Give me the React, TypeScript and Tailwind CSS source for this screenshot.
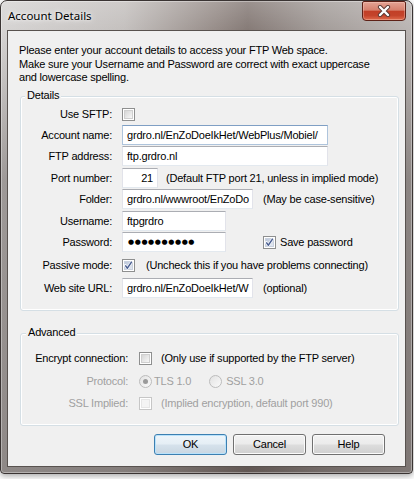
import React from "react";

function Check({ checked = false, disabled = false }: { checked?: boolean; disabled?: boolean }) {
  return (
    <div
      className={`relative w-[13px] h-[13px] shrink-0 border ${
        disabled ? "border-[#c6c6c6]" : "border-[#8e8f8f]"
      } bg-white p-[1px]`}
    >
      <div
        className={`w-full h-full border ${
          disabled
            ? "border-[#e6e6e6] bg-[#f4f4f4]"
            : checked
            ? "border-[#c9d1de] bg-[linear-gradient(135deg,#bcc7da_0%,#e4e9f2_100%)]"
            : "border-[#cfcfcf] bg-[linear-gradient(135deg,#d6d6d6_0%,#f7f7f7_100%)]"
        }`}
      />
      {checked && (
        <svg className="absolute left-[-1px] top-[-1px]" width="13" height="13" viewBox="0 0 13 13">
          <path d="M3.3 6.4 L5.4 9.2 L9.8 2.6" stroke="#ffffff" strokeWidth="2.6" fill="none" strokeLinecap="round" strokeLinejoin="round" />
          <path d="M3.3 6.4 L5.4 9.2 L9.8 2.6" stroke="#4a5f92" strokeWidth="1.5" fill="none" strokeLinejoin="round" />
        </svg>
      )}
    </div>
  );
}

function Radio({ selected = false }: { selected?: boolean }) {
  return (
    <div className="relative w-[13px] h-[13px] shrink-0 rounded-full border border-[#bcbcbc] bg-[linear-gradient(135deg,#e2e2e2_0%,#fafafa_100%)] flex items-center justify-center">
      {selected && <div className="w-[5px] h-[5px] rounded-full bg-[#9a9a9a]" />}
    </div>
  );
}

function Label({ children, w, disabled = false }: { children: React.ReactNode; w: string; disabled?: boolean }) {
  return (
    <div className={`${w} shrink-0 text-right whitespace-nowrap ${disabled ? "text-[#a0a0a0]" : "text-black"}`}>
      {children}
    </div>
  );
}

function Field({
  children,
  cls,
  right = false,
  hot = false,
}: {
  children: React.ReactNode;
  cls: string;
  right?: boolean;
  hot?: boolean;
}) {
  return (
    <div
      className={`${cls} h-[20px] shrink-0 bg-white border overflow-hidden whitespace-nowrap flex items-center ${
        right ? "justify-end pr-[4px]" : "pl-[4px]"
      } ${
        hot
          ? "border-[#aec4dc] border-t-[#7f9fc4]"
          : "border-[#e2e3ea] border-t-[#abadb3] border-b-[#e3e9ef]"
      }`}
    >
      {children}
    </div>
  );
}

function Button({ children, def = false }: { children: React.ReactNode; def?: boolean }) {
  return (
    <div
      className={`w-[73px] h-[21px] rounded-[3px] border flex items-center justify-center text-black ${
        def
          ? "border-[#3c7fb1] shadow-[inset_0_0_0_1px_#b9e2fb] bg-[linear-gradient(180deg,#eef5fa_0%,#e5eef5_48%,#d6e2ec_52%,#c9d6e1_100%)]"
          : "border-[#707070] shadow-[inset_0_0_0_1px_#fbfbfb] bg-[linear-gradient(180deg,#f2f2f2_0%,#ebebeb_48%,#dddddd_52%,#cfcfcf_100%)]"
      }`}
    >
      {children}
    </div>
  );
}

export default function App() {
  return (
    <div className="w-[414px] h-[479px] bg-white relative overflow-hidden font-['Liberation_Sans',Arial,sans-serif] text-[11px] leading-[13px] tracking-[-0.2px]">
      <div className="w-[413px] h-[474px] rounded-t-[7px] rounded-b-[4px] border border-[#3a3433] shadow-[0_2px_6px_rgba(0,0,0,0.35),inset_0_0_0_1px_rgba(255,255,255,0.35)] bg-[linear-gradient(180deg,rgba(255,255,255,0.18)_0%,rgba(0,0,0,0)_30px,rgba(55,45,42,0.35)_180px,rgba(55,45,42,0.45)_100%),linear-gradient(90deg,#d6d4d3_0%,#c4c0be_30%,#978d89_52%,#857a76_60%,#a39c99_78%,#bab5b3_100%)] flex flex-col px-[6px] pb-[6px]">
        {/* Title bar */}
        <div className="h-[29px] shrink-0 flex items-start justify-between">
          <div className="mt-[7px] pl-[1px] leading-[15px] text-[11.5px] tracking-normal font-['Noto_Sans',sans-serif] text-black [text-shadow:0_0_7px_rgba(255,255,255,0.95),0_0_3px_rgba(255,255,255,0.9)]">
            Account Details
          </div>
          <div className="w-[44px] h-[20px] rounded-b-[4px] rounded-t-[2px] border border-[#5e2117] shadow-[inset_0_0_0_1px_rgba(255,220,210,0.35)] bg-[linear-gradient(180deg,#e4a394_0%,#d6806d_45%,#c23f27_52%,#c4442b_75%,#df6a4c_100%)] flex items-center justify-center">
            <svg width="14" height="12" viewBox="0 0 14 12">
              <path d="M3 2 L11 10 M11 2 L3 10" stroke="#5a3a35" strokeWidth="4.2" strokeLinecap="round" />
              <path d="M3 2 L11 10 M11 2 L3 10" stroke="#ffffff" strokeWidth="2.4" strokeLinecap="round" />
            </svg>
          </div>
        </div>

        {/* Client area */}
        <div className="flex-1 border border-[#58524f] bg-[#f0f0f0] flex flex-col">
          <div className="h-[65px] shrink-0 pt-[13px] pl-[11px] leading-[13.5px] text-black">
            <div>Please enter your account details to access your FTP Web space.</div>
            <div>Make sure your Username and Password are correct with exact uppercase</div>
            <div>and lowercase spelling.</div>
          </div>

          {/* Details group */}
          <div className="relative ml-[12px] mr-[6px] h-[215px] shrink-0 border border-[#d5dfe5] rounded-[3px] shadow-[inset_0_0_0_1px_#ffffff] flex flex-col">
            <div className="absolute left-[4px] top-[-8px] px-[2px] bg-[#f0f0f0] text-black">Details</div>

            <div className="mt-[7px] h-[21px] flex items-center">
              <Label w="w-[91px]">Use SFTP:</Label>
              <div className="ml-[10px]"><Check /></div>
            </div>
            <div className="h-[20px] flex items-center">
              <Label w="w-[91px]">Account name:</Label>
              <div className="ml-[10px]"><Field cls="w-[206px]" hot>grdro.nl/EnZoDoeIkHet/WebPlus/Mobiel/</Field></div>
            </div>
            <div className="mt-[1px] h-[20px] flex items-center">
              <Label w="w-[91px]">FTP address:</Label>
              <div className="ml-[10px]"><Field cls="w-[206px]">ftp.grdro.nl</Field></div>
            </div>
            <div className="mt-[2px] h-[20px] flex items-center">
              <Label w="w-[91px]">Port number:</Label>
              <div className="ml-[10px]"><Field cls="w-[36px]" right>21</Field></div>
              <div className="ml-[8px] whitespace-nowrap">(Default FTP port 21, unless in implied mode)</div>
            </div>
            <div className="mt-[1px] h-[20px] flex items-center">
              <Label w="w-[91px]">Folder:</Label>
              <div className="ml-[10px]"><Field cls="w-[131px]">grdro.nl/wwwroot/EnZoDo</Field></div>
              <div className="ml-[10px] whitespace-nowrap">(May be case-sensitive)</div>
            </div>
            <div className="mt-[2px] h-[20px] flex items-center">
              <Label w="w-[91px]">Username:</Label>
              <div className="ml-[10px]"><Field cls="w-[104px]">ftpgrdro</Field></div>
            </div>
            <div className="mt-[1px] h-[20px] flex items-center">
              <Label w="w-[91px]">Password:</Label>
              <div className="ml-[10px]">
                <Field cls="w-[104px]">
                  <span className="pl-[1px] font-['DejaVu_Sans',sans-serif] text-[7px] tracking-[0.6px] leading-[10px]">●●●●●●●●●●</span>
                </Field>
              </div>
              <div className="ml-[37px]"><Check checked /></div>
              <div className="ml-[4px] whitespace-nowrap">Save password</div>
            </div>
            <div className="mt-[3px] h-[20px] flex items-center">
              <Label w="w-[91px]">Passive mode:</Label>
              <div className="ml-[10px]"><Check checked /></div>
              <div className="ml-[11px] whitespace-nowrap">(Uncheck this if you have problems connecting)</div>
            </div>
            <div className="mt-[3px] h-[20px] flex items-center">
              <Label w="w-[91px]">Web site URL:</Label>
              <div className="ml-[10px]"><Field cls="w-[131px]">grdro.nl/EnZoDoeIkHet/W</Field></div>
              <div className="ml-[10px] whitespace-nowrap">(optional)</div>
            </div>
          </div>

          {/* Advanced group */}
          <div className="relative mt-[22px] ml-[12px] mr-[6px] h-[93px] shrink-0 border border-[#d5dfe5] rounded-[3px] shadow-[inset_0_0_0_1px_#ffffff] flex flex-col">
            <div className="absolute left-[5px] top-[-8px] px-[2px] bg-[#f0f0f0] text-black">Advanced</div>

            <div className="mt-[14px] h-[20px] flex items-center">
              <Label w="w-[107px]">Encrypt connection:</Label>
              <div className="ml-[11px]"><Check /></div>
              <div className="ml-[9px] whitespace-nowrap">(Only use if supported by the FTP server)</div>
            </div>
            <div className="mt-[3px] h-[20px] flex items-center">
              <Label w="w-[107px]" disabled>Protocol:</Label>
              <div className="ml-[11px]"><Radio selected /></div>
              <div className="ml-[2px] whitespace-nowrap text-[#a0a0a0]">TLS 1.0</div>
              <div className="ml-[18px]"><Radio /></div>
              <div className="ml-[4px] whitespace-nowrap text-[#a0a0a0]">SSL 3.0</div>
            </div>
            <div className="mt-[2px] h-[20px] flex items-center">
              <Label w="w-[107px]" disabled>SSL Implied:</Label>
              <div className="ml-[11px]"><Check disabled /></div>
              <div className="ml-[9px] whitespace-nowrap text-[#a0a0a0]">(Implied encryption, default port 990)</div>
            </div>
          </div>

          {/* Buttons */}
          <div className="mt-[8px] flex justify-end gap-[6px] pr-[20px]">
            <Button def>OK</Button>
            <Button>Cancel</Button>
            <Button>Help</Button>
          </div>
        </div>
      </div>
    </div>
  );
}
